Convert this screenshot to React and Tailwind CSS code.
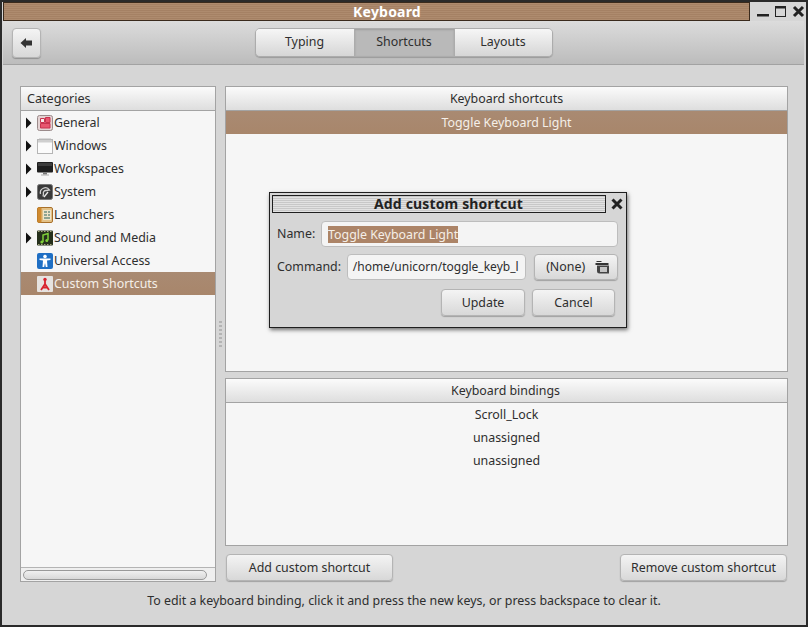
const hdr = "bg-gradient-to-b from-[#fbfbfb] to-[#dedede] border-b border-[#a3a3a3]";
const btn = "flex items-center justify-center rounded-[4px] border border-[#b4b4b4] bg-gradient-to-b from-[#f4f4f4] to-[#d8d8d8] shadow-[0_1px_1px_rgba(0,0,0,0.25)]";
const sel = "bg-gradient-to-b from-[#a98a72] to-[#a8866b] text-[#f5efe8]";

const Arrow = () => (
  <svg width="6" height="12" viewBox="0 0 6 12" className="shrink-0"><path d="M0 0.5 L5.5 6 L0 11.5 Z" fill="#111" /></svg>
);

const icons = {
  general: (
    <svg width="16" height="16" viewBox="0 0 16 16"><rect x="0.5" y="0.5" width="15" height="15" rx="2" fill="#e4d3d3" stroke="#9a8a8a" /><path d="M3.5 3.5h4v4h-4z" fill="#f6e9e9" stroke="#c8334f" /><path d="M8.5 2.5h4.5v5h-4.5z" fill="#e8566f" stroke="#c8334f" /><path d="M3.5 8.5h9.5v4.5h-9.5z" fill="#e8566f" stroke="#c8334f" /></svg>
  ),
  windows: (
    <svg width="16" height="16" viewBox="0 0 16 16"><rect x="0.5" y="1.5" width="15" height="14" fill="#fbfbfb" stroke="#b5b5b5" /><rect x="1" y="2" width="14" height="2.5" fill="#cfcfcf" /><rect x="2" y="0.5" width="12" height="1" fill="#b9b9b9" /></svg>
  ),
  workspaces: (
    <svg width="16" height="16" viewBox="0 0 16 16"><rect x="0" y="1" width="16" height="10.5" rx="1" fill="#1f1f1f" /><rect x="1" y="2" width="14" height="3" fill="#3d3d3d" /><rect x="6" y="11.5" width="4" height="2" fill="#777" /><rect x="4" y="13.5" width="8" height="1" fill="#aaa" /></svg>
  ),
  system: (
    <svg width="16" height="16" viewBox="0 0 16 16"><rect x="0.5" y="0.5" width="15" height="15" rx="2" fill="#3a3a3a" stroke="#777" /><path d="M3.5 10 A5 5 0 0 1 12.5 6 L9 6.5 A2.5 2.5 0 0 0 6.5 10 L6 12.5" fill="none" stroke="#d0d0d0" strokeWidth="1.3" /><path d="M7 13 L11 8" stroke="#e8e8e8" strokeWidth="1.3" /></svg>
  ),
  launchers: (
    <svg width="16" height="16" viewBox="0 0 16 16"><rect x="0.5" y="0.5" width="15" height="15" rx="1.5" fill="#e3c187" stroke="#a8702a" /><rect x="0.5" y="0.5" width="4" height="15" rx="1" fill="#d08a2e" /><rect x="6" y="3" width="8" height="10" fill="#efe4c8" /><path d="M7 5h3M11 5h2M7 8h3M11 8h2M7 11h6" stroke="#6f8f80" strokeWidth="1.4" /></svg>
  ),
  sound: (
    <svg width="16" height="16" viewBox="0 0 16 16"><rect x="0" y="0.5" width="16" height="15" rx="1" fill="#25301c" /><path d="M1 1.5h14M1 14.5h14" stroke="#a9a97f" strokeDasharray="1.5 1.5" /><path d="M6 12V5l5-1.5V10" stroke="#7fcf3a" strokeWidth="1.5" fill="none" /><circle cx="4.8" cy="12" r="1.5" fill="#7fcf3a" /><circle cx="9.8" cy="10.5" r="1.5" fill="#7fcf3a" /></svg>
  ),
  access: (
    <svg width="16" height="16" viewBox="0 0 16 16"><rect x="0" y="0" width="16" height="16" rx="2" fill="#1f6fc4" /><circle cx="8" cy="3.5" r="1.8" fill="#fff" /><path d="M2.5 5.5 L13.5 5.5 L13.5 7 L10 7.5 L10.5 14 L8.8 14 L8 10 L7.2 14 L5.5 14 L6 7.5 L2.5 7 Z" fill="#fff" /></svg>
  ),
  custom: (
    <svg width="16" height="16" viewBox="0 0 16 16"><rect x="0" y="0" width="16" height="16" rx="1" fill="#e6e3e0" /><circle cx="8" cy="3.5" r="1.7" fill="#d8242f" /><path d="M8 5 V8 M8 8 L4 14 M8 8 L12 14 M5.5 11.5 L10.5 11.5" stroke="#d8242f" strokeWidth="1.8" /></svg>
  ),
};

const categories = [
  ["General", "general", true],
  ["Windows", "windows", true],
  ["Workspaces", "workspaces", true],
  ["System", "system", true],
  ["Launchers", "launchers", false],
  ["Sound and Media", "sound", true],
  ["Universal Access", "access", false],
  ["Custom Shortcuts", "custom", false, true],
];

function Tab({ children, active, className }) {
  return (
    <div className={`h-full flex items-center justify-center ${active ? "bg-[#b9b9b9] shadow-[inset_0_1px_2px_rgba(0,0,0,0.15)]" : "bg-gradient-to-b from-[#f6f6f6] to-[#d6d6d6]"} ${className || ""}`}>
      {children}
    </div>
  );
}

function Dialog() {
  return (
    <div className="absolute left-[269px] top-[192px] w-[358px] h-[136px] border-[1.5px] border-[#1f1f1f] bg-[#d6d6d6] shadow-[1px_2px_4px_rgba(0,0,0,0.55)] px-[2px] pt-[1px] flex flex-col">
      <div className="flex items-center h-[20px] shrink-0">
        <div className="w-[334px] h-[18px] border border-[#1f1f1f] flex items-center justify-center pl-[19px] font-bold text-[14px] text-[#222] bg-[repeating-linear-gradient(180deg,#c8c8c8_0px,#c8c8c8_1px,#e2e2e2_1px,#e2e2e2_2px)]">
          <span className="leading-[16px] tracking-[0.15px]">Add custom shortcut</span>
        </div>
        <svg width="14" height="14" viewBox="0 0 14 14" className="ml-[4px]"><path d="M2.5 2.5 L11.5 11.5 M11.5 2.5 L2.5 11.5" stroke="#222" strokeWidth="3" /></svg>
      </div>
      <div className="flex items-center mt-[7px] pl-[5px] pr-[6px] h-[26px] shrink-0">
        <span className="w-[44px]">Name:</span>
        <div className="flex-1 h-[26px] rounded-[4px] border border-[#bdbdbd] bg-[#f4f4f4] flex items-center pl-[6px]">
          <span className="bg-[#ac8467] text-[#f5efe8] leading-[17px] h-[17px]">Toggle Keyboard Light</span>
        </div>
      </div>
      <div className="flex items-center mt-[7px] pl-[5px] pr-[6px] h-[26px] shrink-0">
        <span className="w-[70px]">Command:</span>
        <div className="w-[180px] h-[26px] rounded-[4px] border border-[#bdbdbd] bg-[#f4f4f4] flex items-center pl-[5px] overflow-hidden whitespace-nowrap text-[12px]">
          /home/unicorn/toggle_keyb_l
        </div>
        <div className={`${btn} w-[84px] h-[26px] ml-[8px] gap-[10px] pl-[4px]`}>
          <span>(None)</span>
          <svg width="15" height="15" viewBox="0 0 15 15"><path d="M1.5 1h5v1h-5zM0.5 3h13v2h-13z" fill="#333" /><path d="M2 5.5h12v8h-9.5a2.5 2.5 0 0 1-2.5-2.5z" fill="#444" /><rect x="5" y="7" width="7" height="5" fill="#c4c4c4" /></svg>
        </div>
      </div>
      <div className="flex justify-end gap-[7px] mt-[9px] pr-[9px]">
        <div className={`${btn} w-[84px] h-[27px] pt-[2px]`}>Update</div>
        <div className={`${btn} w-[83px] h-[27px] pt-[2px]`}>Cancel</div>
      </div>
    </div>
  );
}

export default function App() {
  return (
    <div className="relative w-[808px] h-[627px] overflow-hidden bg-[#d6d6d6] border-[2px] border-[#2a2a2a] font-['Noto_Sans',sans-serif] text-[12.4px] text-[#2e2e2e] flex flex-col">
      {/* title bar */}
      <div className="flex h-[19px] shrink-0 items-stretch bg-[#d6d6d6]">
        <div className="ml-[1px] w-[747px] border border-[#3a2a1c] flex items-center justify-center pl-[21px] text-white font-bold text-[14px] tracking-[0.2px] bg-[repeating-linear-gradient(180deg,#ae8b6e_0px,#ae8b6e_1px,#a58164_1px,#a58164_2px)]">
          Keyboard
        </div>
        <div className="flex items-center gap-[5px] pl-[6px]">
          <svg width="13" height="13" viewBox="0 0 13 13"><rect x="1" y="9" width="12" height="2.5" fill="#222" /></svg>
          <svg width="13" height="13" viewBox="0 0 13 13"><rect x="1.5" y="1.5" width="10" height="10" fill="none" stroke="#222" /><rect x="1" y="1" width="11" height="2.5" fill="#222" /></svg>
          <svg width="13" height="13" viewBox="0 0 13 13"><path d="M2 2 L11 11 M11 2 L2 11" stroke="#222" strokeWidth="3" /></svg>
        </div>
      </div>

      {/* toolbar */}
      <div className="relative h-[44px] shrink-0 mr-[2px] ml-[1px] flex items-center justify-center border-b border-[#a2a2a2] bg-gradient-to-b from-[#dcdcdc] to-[#bcbcbc]">
        <div className={`${btn} absolute left-[9px] top-[7px] w-[29px] h-[30px]`}>
          <svg width="13" height="12" viewBox="0 0 13 12"><path d="M0.5 6 L6 1 V3.5 H12 V8.5 H6 V11 Z" fill="#333" /></svg>
        </div>
        <div className="flex h-[29px] -mt-[1px] rounded-[5px] border border-[#acacac] overflow-hidden shadow-[0_1px_1px_rgba(0,0,0,0.2)]">
          <Tab className="w-[99px] border-r border-[#acacac]">Typing</Tab>
          <Tab className="w-[99px]" active>Shortcuts</Tab>
          <Tab className="w-[98px] border-l border-[#acacac]">Layouts</Tab>
        </div>
      </div>

      {/* main */}
      <div className="flex-1 flex flex-col pl-[18px] pr-[18px] pt-[21px]">
        <div className="flex h-[496px] shrink-0">
          <div className="w-[196px] shrink-0 border border-[#a3a3a3] bg-[#f6f6f6] flex flex-col">
            <div className={`${hdr} h-[24px] shrink-0 flex items-center pl-[6px] pt-[2px] text-[12.6px]`}>Categories</div>
            <div className="flex-1 flex flex-col">
              {categories.map(([name, icon, arrow, isSel]) => (
                <div key={name} className={`h-[23px] flex items-center ${isSel ? sel : ""}`}>
                  <div className="w-[15px] pl-[5px] shrink-0">{arrow && <Arrow />}</div>
                  <div className="w-[16px] ml-[1px] h-[16px] shrink-0 flex">{icons[icon]}</div>
                  <span className="ml-[1px] pt-[2px]">{name}</span>
                </div>
              ))}
            </div>
            <div className="h-[14px] shrink-0 border-t border-[#b4b4b4] flex items-center pl-[2px] pr-[8px] bg-[#efefef]">
              <div className="w-full h-[10px] rounded-full border border-[#999] bg-gradient-to-b from-[#f0f0f0] to-[#d8d8d8]" />
            </div>
          </div>

          <div className="w-[9px] shrink-0 flex flex-col items-center justify-center gap-[2px]">
            {[0, 1, 2, 3, 4, 5, 6].map((i) => (
              <div key={i} className="w-[3px] h-[2px] bg-[#b4b4b4]" />
            ))}
          </div>

          <div className="flex-1 flex flex-col min-w-0">
            <div className="h-[286px] shrink-0 border border-[#a3a3a3] bg-[#f6f6f6] flex flex-col">
              <div className={`${hdr} h-[24px] shrink-0 flex items-center justify-center pt-[2px]`}>Keyboard shortcuts</div>
              <div className={`h-[23px] shrink-0 flex items-center justify-center pt-[2px] ${sel}`}>Toggle Keyboard Light</div>
            </div>
            <div className="h-[168px] mt-[6px] shrink-0 border border-[#a3a3a3] bg-[#f6f6f6] flex flex-col">
              <div className={`${hdr} h-[24px] shrink-0 flex items-center justify-center pt-[2px] pr-[2px]`}>Keyboard bindings</div>
              <div className="h-[23px] flex items-center justify-center pt-[2px]">Scroll_Lock</div>
              <div className="h-[23px] flex items-center justify-center pt-[2px]">unassigned</div>
              <div className="h-[23px] flex items-center justify-center pt-[2px]">unassigned</div>
            </div>
            <div className="flex justify-between mt-[8px]">
              <div className={`${btn} w-[167px] h-[27px] ml-[1px] pt-[2px]`}>Add custom shortcut</div>
              <div className={`${btn} w-[167px] h-[27px] mr-[1px] pt-[2px]`}>Remove custom shortcut</div>
            </div>
          </div>
        </div>
        <div className="text-center mt-[10px]">To edit a keyboard binding, click it and press the new keys, or press backspace to clear it.</div>
      </div>

      <div className="absolute -left-[2px] -top-[2px]"><Dialog /></div>
    </div>
  );
}
